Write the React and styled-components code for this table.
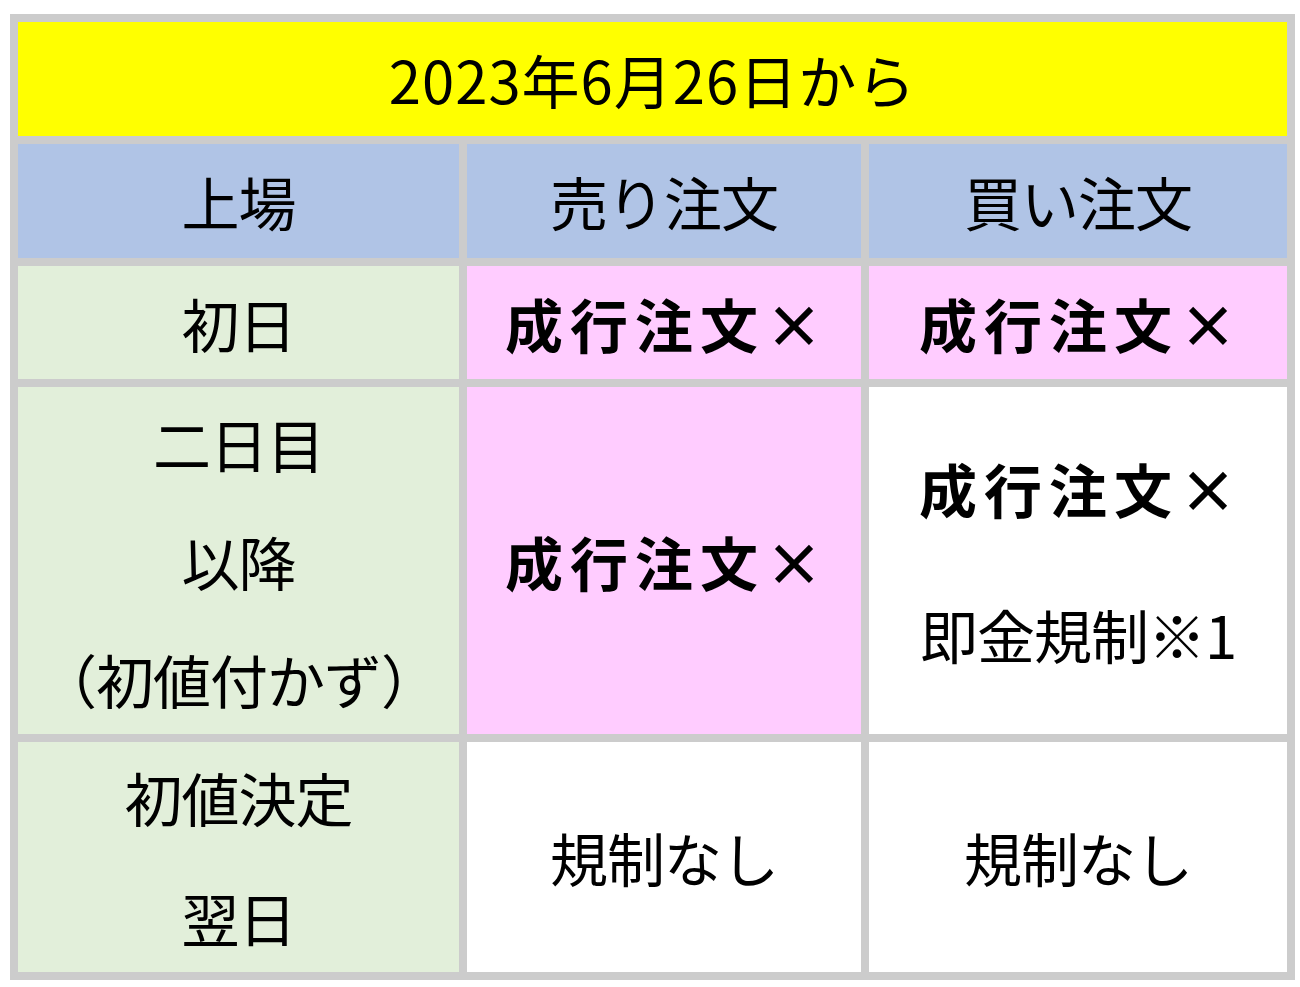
import styled, { createGlobalStyle } from "styled-components";

const GlobalStyle = createGlobalStyle`
  body {
    margin: 0;
    background: #ffffff;
    font-family: "Noto Sans CJK JP", "Noto Sans", sans-serif;
    color: #000000;
  }
`;

const Page = styled.div`
  padding: 14px 0 0 10px;
`;

const Table = styled.div`
  display: grid;
  width: 1285px;
  box-sizing: border-box;
  grid-template-columns: 441px 394px 418px;
  grid-template-rows: 114px 114px 113px 347px 230px;
  gap: 8px;
  padding: 8px;
  background: #cccccc;
`;

const Cell = styled.div`
  display: flex;
  flex-direction: column;
  align-items: center;
  justify-content: center;
  gap: ${(p) => p.$gap || 0}px;
  background: ${(p) => p.$bg || "#ffffff"};
  grid-column: ${(p) => p.$span || "auto"};
  font-size: 58px;
  line-height: ${(p) => p.$lh || 114}px;
  white-space: nowrap;
  letter-spacing: ${(p) => p.$ls ?? -1}px;
`;

const Bold = styled.span`
  font-weight: 700;
  letter-spacing: 7px;
  padding-left: 7px;
`;

const Line = styled.span``;

const YELLOW = "#ffff00";
const BLUE = "#b0c4e6";
const GREEN = "#e2efda";
const PINK = "#ffccff";

export default function App() {
  return (
    <Page>
      <GlobalStyle />
      <Table>
        <Cell $bg={YELLOW} $span="1 / span 3" $ls={1}>
          2023年6月26日から
        </Cell>

        <Cell $bg={BLUE}>上場</Cell>
        <Cell $bg={BLUE}>売り注文</Cell>
        <Cell $bg={BLUE}>買い注文</Cell>

        <Cell $bg={GREEN}>初日</Cell>
        <Cell $bg={PINK}>
          <Bold>成行注文×</Bold>
        </Cell>
        <Cell $bg={PINK}>
          <Bold>成行注文×</Bold>
        </Cell>

        <Cell $bg={GREEN} $lh={118}>
          <Line>二日目</Line>
          <Line>以降</Line>
          <Line>（初値付かず）</Line>
        </Cell>
        <Cell $bg={PINK}>
          <Bold>成行注文×</Bold>
        </Cell>
        <Cell $gap={32}>
          <Bold>成行注文×</Bold>
          <Line>即金規制※1</Line>
        </Cell>

        <Cell $bg={GREEN} $lh={120}>
          <Line>初値決定</Line>
          <Line>翌日</Line>
        </Cell>
        <Cell>規制なし</Cell>
        <Cell>規制なし</Cell>
      </Table>
    </Page>
  );
}
